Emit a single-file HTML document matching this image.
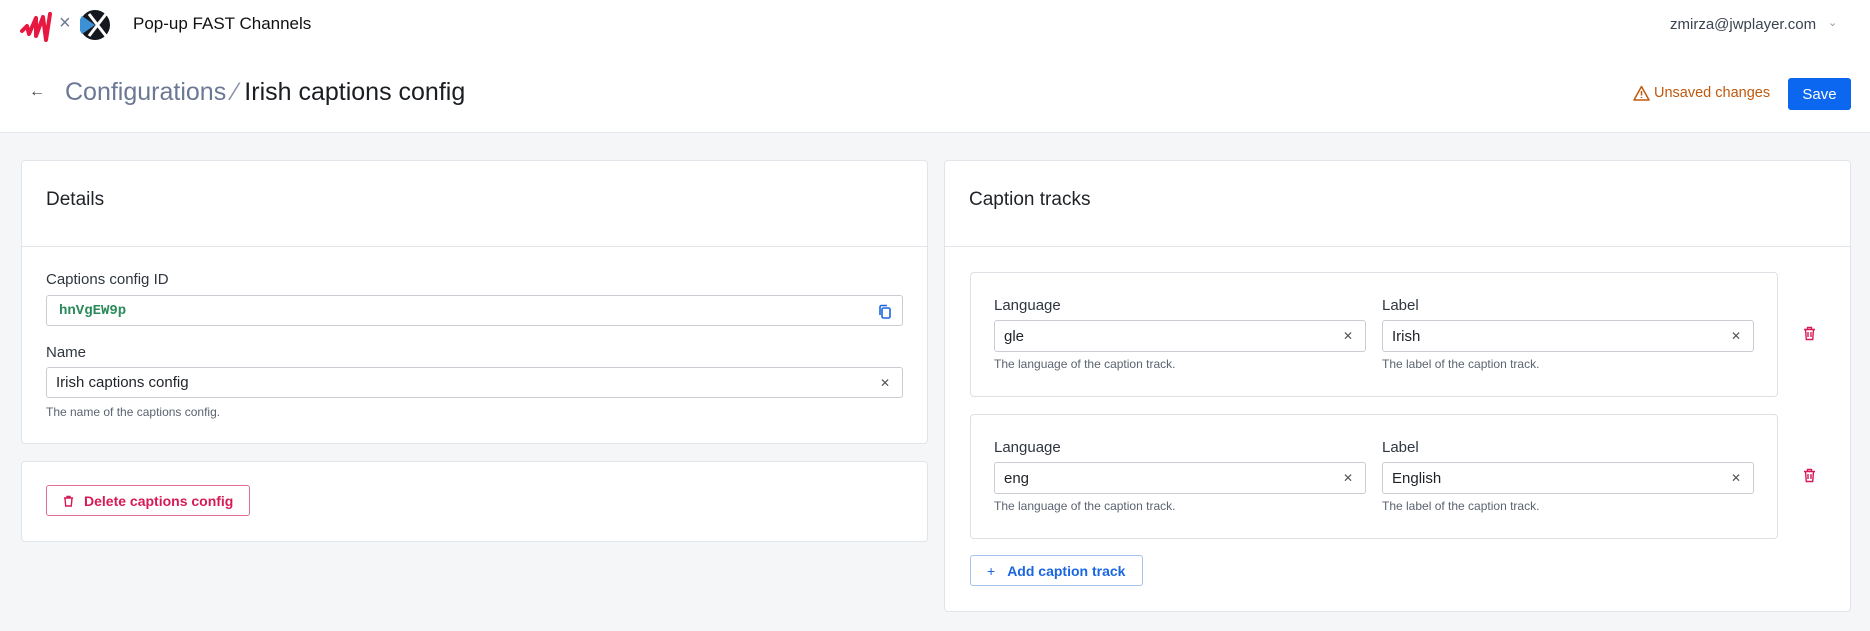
<!DOCTYPE html>
<html><head><meta charset="utf-8"><style>
*{box-sizing:border-box;margin:0;padding:0}
body{width:1870px;height:631px;background:#f5f6f8;font-family:"Liberation Sans",sans-serif;color:#1f2328;position:relative;overflow:hidden}
.abs{position:absolute}
.hdr{left:0;top:0;width:1870px;height:133px;background:#fff;border-bottom:1px solid #e3e6ea}
.card{background:#fff;border:1px solid #e1e4e8;border-radius:4px}
.lbl{font-size:15px;color:#2f3640}
.inp{background:#fff;border:1px solid #c9cdd3;border-radius:3px;font-size:15px;padding-left:9px;display:flex;align-items:center}
.x{position:absolute;right:12px;top:50%;transform:translateY(-50%);font-size:12px;color:#555}
.help{font-size:12px;color:#5b6470}
.ttl{font-size:19px;color:#1f2328}
</style></head><body>
<div class="abs hdr"></div>
<svg class="abs" style="left:20px;top:12px" width="32" height="32" viewBox="0 0 32 32"><path d="M2 19 L7 14 L9 22 L16 6 L16 24 L23 5 L26 28 L30 2" fill="none" stroke="#e8173f" stroke-width="4" stroke-linejoin="round" stroke-linecap="round"/></svg>
<div class="abs" style="left:59px;top:12px;font-size:20px;color:#6b7a90">×</div>
<svg class="abs" style="left:80px;top:10px" width="30" height="30" viewBox="0 0 30 30"><circle cx="15" cy="15" r="15" fill="#15191f"/><path d="M2 6 L15 15 L2 24 A15 15 0 0 1 2 6Z" fill="#3d8fd6"/><path d="M9 4 L26 26 M26 4 L9 26" stroke="#fff" stroke-width="3"/></svg>
<div class="abs" style="left:133px;top:14px;font-size:17px;color:#111">Pop-up FAST Channels</div>
<div class="abs" style="left:1670px;top:16px;font-size:15px;color:#3a4350">zmirza@jwplayer.com</div>
<div class="abs" style="left:1828px;top:16px;font-size:11px;color:#999">&#8964;</div>
<div class="abs" style="left:29px;top:83px;font-size:16px;color:#444">←</div>
<div class="abs" style="left:65px;top:78px;font-size:25px;color:#6b7894">Configurations <span style="color:#8a94a8">⁄</span>&nbsp;<span style="color:#1a1d22">Irish captions config</span></div>
<svg class="abs" style="left:1633px;top:85px" width="17" height="16" viewBox="0 0 17 16"><path d="M8.5 1.5 L16 15 L1 15Z" fill="none" stroke="#c0580d" stroke-width="1.5" stroke-linejoin="round"/><path d="M8.5 6v4.5M8.5 12v1" stroke="#c0580d" stroke-width="1.5"/></svg>
<div class="abs" style="left:1654px;top:85px;font-size:14.5px;color:#c0580d">Unsaved changes</div>
<div class="abs" style="left:1788px;top:78px;width:63px;height:32px;background:#0b66f0;border-radius:3px;color:#fff;font-size:15px;display:flex;align-items:center;justify-content:center">Save</div>

<div class="abs card" style="left:21px;top:160px;width:907px;height:284px"></div>
<div class="abs" style="left:22px;top:246px;width:905px;height:1px;background:#e1e4e8"></div>
<div class="abs ttl" style="left:46px;top:189px">Details</div>
<div class="abs lbl" style="left:46px;top:271px">Captions config ID</div>
<div class="abs inp" style="left:46px;top:295px;width:857px;height:31px;font-family:'Liberation Mono',monospace;font-size:14px;color:#2a8a5a;font-weight:bold;padding-left:12px">hnVgEW9p
<svg style="position:absolute;right:10px;top:8px" width="14" height="15" viewBox="0 0 14 15"><rect x="4" y="4" width="8" height="10" rx="1.5" fill="none" stroke="#1a66e0" stroke-width="1.6"/><path d="M2 11V3a1.5 1.5 0 0 1 1.5-1.5H9" fill="none" stroke="#1a66e0" stroke-width="1.6"/></svg></div>
<div class="abs lbl" style="left:46px;top:344px">Name</div>
<div class="abs inp" style="left:46px;top:367px;width:857px;height:31px">Irish captions config<span class="x">✕</span></div>
<div class="abs help" style="left:46px;top:405px">The name of the captions config.</div>

<div class="abs card" style="left:21px;top:461px;width:907px;height:81px"></div>
<div class="abs" style="left:46px;top:485px;width:204px;height:31px;border:1px solid #e07090;border-radius:3px;color:#d61a55;font-size:14px;font-weight:bold;display:flex;align-items:center;padding-left:16px">
<svg width="11" height="12" viewBox="0 0 11 12" style="margin-right:10px"><path d="M1 3h9M4 3V1.5h3V3M2 3l.7 8h5.6L9 3" fill="none" stroke="#d61a55" stroke-width="1.4"/></svg>Delete captions config</div>

<div class="abs card" style="left:944px;top:160px;width:907px;height:452px"></div>
<div class="abs" style="left:945px;top:246px;width:905px;height:1px;background:#e1e4e8"></div>
<div class="abs ttl" style="left:969px;top:189px">Caption tracks</div>

<div class="abs card" style="left:970px;top:272px;width:808px;height:125px;border-color:#dde0e5"></div>
<div class="abs lbl" style="left:994px;top:297px">Language</div>
<div class="abs lbl" style="left:1382px;top:297px">Label</div>
<div class="abs inp" style="left:994px;top:320px;width:372px;height:32px">gle<span class="x">✕</span></div>
<div class="abs inp" style="left:1382px;top:320px;width:372px;height:32px">Irish<span class="x">✕</span></div>
<div class="abs help" style="left:994px;top:357px">The language of the caption track.</div>
<div class="abs help" style="left:1382px;top:357px">The label of the caption track.</div>
<svg class="abs" style="left:1803px;top:326px" width="13" height="15" viewBox="0 0 13 15"><path d="M1 3.5h11M4.5 3.5V1.5h4v2M2.5 3.5l.8 10h6.4l.8-10M5 6v5M8 6v5" fill="none" stroke="#d61a55" stroke-width="1.4"/></svg>

<div class="abs card" style="left:970px;top:414px;width:808px;height:125px;border-color:#dde0e5"></div>
<div class="abs lbl" style="left:994px;top:439px">Language</div>
<div class="abs lbl" style="left:1382px;top:439px">Label</div>
<div class="abs inp" style="left:994px;top:462px;width:372px;height:32px">eng<span class="x">✕</span></div>
<div class="abs inp" style="left:1382px;top:462px;width:372px;height:32px">English<span class="x">✕</span></div>
<div class="abs help" style="left:994px;top:499px">The language of the caption track.</div>
<div class="abs help" style="left:1382px;top:499px">The label of the caption track.</div>
<svg class="abs" style="left:1803px;top:468px" width="13" height="15" viewBox="0 0 13 15"><path d="M1 3.5h11M4.5 3.5V1.5h4v2M2.5 3.5l.8 10h6.4l.8-10M5 6v5M8 6v5" fill="none" stroke="#d61a55" stroke-width="1.4"/></svg>

<div class="abs" style="left:970px;top:555px;width:173px;height:31px;border:1px solid #a9c4ee;border-radius:3px;color:#1a66e0;font-size:14px;font-weight:bold;display:flex;align-items:center;padding-left:16px"><span style="font-weight:normal;margin-right:12px">+</span>Add caption track</div>
</body></html>
